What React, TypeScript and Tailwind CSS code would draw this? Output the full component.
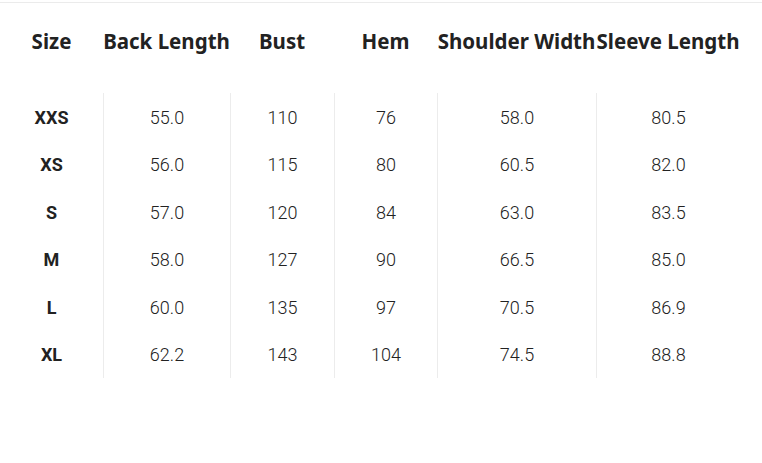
const headers = ['Size', 'Back Length', 'Bust', 'Hem', 'Shoulder Width', 'Sleeve Length'];

const rows = [
  ['XXS', '55.0', '110', '76', '58.0', '80.5'],
  ['XS', '56.0', '115', '80', '60.5', '82.0'],
  ['S', '57.0', '120', '84', '63.0', '83.5'],
  ['M', '58.0', '127', '90', '66.5', '85.0'],
  ['L', '60.0', '135', '97', '70.5', '86.9'],
  ['XL', '62.2', '143', '104', '74.5', '88.8'],
];

const cols = 'grid grid-cols-[103px_127px_104px_103px_159px_144px]';

export default function App() {
  return (
    <div className="w-[762px] h-[463px] bg-white text-[#222] font-['Roboto','Liberation_Sans',sans-serif]">
      <div className="h-[2px]" />
      <div className="border-t border-[#ebebeb]">
        {/* Header */}
        <div className={`${cols} h-[90px] pt-[22px]`}>
          {headers.map((h) => (
            <div
              key={h}
              className="flex justify-center text-[20.5px] leading-[32px] font-bold whitespace-nowrap font-['Noto_Sans','Roboto',sans-serif]"
            >
              {h}
            </div>
          ))}
        </div>

        {/* Body */}
        <div className={cols}>
          {headers.map((h, c) => (
            <div key={h} className={`flex flex-col ${c > 0 ? 'border-l border-[#ececec]' : ''}`}>
              {rows.map((r) => (
                <div
                  key={r[0]}
                  className={`h-[47.5px] pt-[1px] flex items-center justify-center text-[18px] ${
                    c === 0 ? 'font-bold text-[#222]' : 'font-light text-[#222]'
                  }`}
                >
                  {r[c]}
                </div>
              ))}
            </div>
          ))}
        </div>
      </div>
    </div>
  );
}
